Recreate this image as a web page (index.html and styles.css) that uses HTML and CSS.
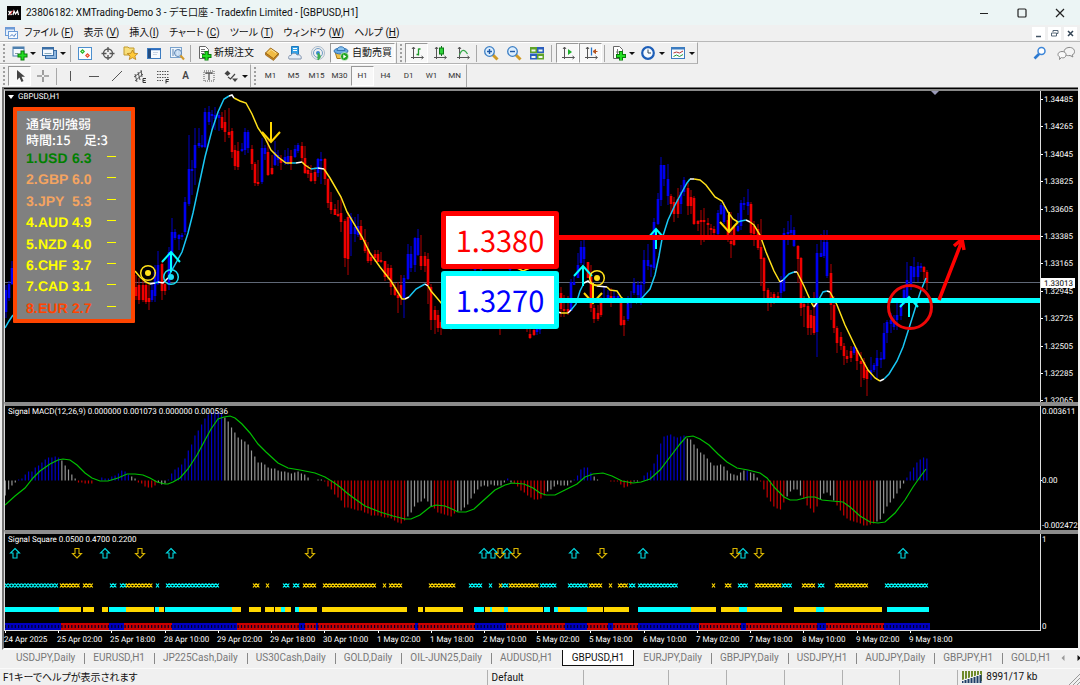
FILE: index.html
```html
<!DOCTYPE html>
<html lang="ja">
<head>
<meta charset="utf-8">
<title>23806182: XMTrading-Demo 3</title>
<link rel="stylesheet" href="styles.css">
</head>
<body>
<header class="titlebar">
  <svg class="logo" width="14" height="14" viewBox="0 0 14 14"><rect width="14" height="14" fill="#050505"/><path d="M1.500 5l3 4M4.500 5l-3 4" stroke="#fff" stroke-width="1.300"/><path d="M6 9l1-4 1.500 3L10.500 5l1 4" fill="none" stroke="#fff" stroke-width="1.200"/><path d="M3 8.500l3-4" stroke="#e33" stroke-width="1"/></svg>
  <h1 class="title">23806182: XMTrading-Demo 3 - デモ口座 - Tradexfin Limited - [GBPUSD,H1]</h1>
  <div class="window-buttons">
    <button aria-label="最小化"><svg width="12" height="12"><path d="M2 6.500h8" stroke="#222"/></svg></button>
    <button aria-label="最大化"><svg width="12" height="12"><rect x="2" y="2" width="8" height="8" rx="1" fill="none" stroke="#222" stroke-width="1.200"/></svg></button>
    <button aria-label="閉じる"><svg width="12" height="12"><path d="M2 2l8 8M10 2l-8 8" stroke="#222" stroke-width="1.200"/></svg></button>
  </div>
</header>
<nav class="menubar">
  <svg class="menu-icon" width="13" height="12" viewBox="0 0 13 12"><rect x=".5" y=".5" width="9" height="8" fill="#e6f0fc" stroke="#6d9bd6"/><path d="M0 1.500h10" stroke="#6d9bd6" stroke-width="2"/><rect x="3.500" y="4.500" width="9" height="7" fill="#f7fbff" stroke="#6d9bd6"/><path d="M5 9.500l2-2 2 2 2-3" fill="none" stroke="#4a7dc4"/></svg>
  <button>ファイル (<u>F</u>)</button>
  <button>表示 (<u>V</u>)</button>
  <button>挿入(<u>I</u>)</button>
  <button>チャート (<u>C</u>)</button>
  <button>ツール (<u>T</u>)</button>
  <button>ウィンドウ (<u>W</u>)</button>
  <button>ヘルプ (<u>H</u>)</button>
  <div class="mdi-buttons">
    <button aria-label="チャート最小化"><svg width="13" height="13"><path d="M4 9.500h5" stroke="#456" stroke-width="1.500"/></svg></button>
    <button aria-label="チャートを元に戻す"><svg width="13" height="13"><path d="M5 5V3.500h5v3H8.500M3.500 6h5v3h-5z" fill="none" stroke="#567"/></svg></button>
    <button aria-label="チャートを閉じる"><svg width="13" height="13"><path d="M4 4l5 5M9 4l-5 5" stroke="#345" stroke-width="1.500"/></svg></button>
  </div>
</nav>
<div class="toolbars">
  <div class="toolbar-row">
    <div class="toolbar">
      <i class="grip"></i>
      <button class="drop" aria-label="新規チャート"><svg width="17" height="16"><rect x="2" y="2" width="11" height="9" fill="#f4f9ff" stroke="#4d7fae"/><path d="M2 3h11" stroke="#4d7fae" stroke-width="2"/><path d="M4 8.500h3" stroke="#89a"/><path d="M11.500 5.500v10M6.500 10.500h10" stroke="#0a7d0a" stroke-width="4"/><path d="M11.500 6.500v8M7.500 10.500h8" stroke="#22dd22" stroke-width="2"/></svg></button>
      <button class="drop" aria-label="プロファイル"><svg width="17" height="16"><rect x="4.500" y="5.500" width="11" height="8" fill="#8fb7e0" stroke="#3b6ea5"/><rect x="1.500" y="2.500" width="11" height="8" fill="#f4f9ff" stroke="#3b6ea5"/><path d="M2 3.500h11" stroke="#3b6ea5" stroke-width="2"/><path d="M3.500 8.500h7" stroke="#8ab"/></svg></button>
      <i class="sep"></i>
      <button aria-label="気配値表示"><svg width="16" height="16"><rect x="1.500" y="2.500" width="13" height="12" fill="#fafdff" stroke="#4d8fce"/><path d="M3 6.500l2.500-2.500L8 6.500 5.500 9z" fill="#1fb01f"/><path d="M8 10.500L10.500 8l2.500 2.500-2.500 2.500z" fill="#e8442a"/><circle cx="5.500" cy="6.500" r=".8" fill="#bfb"/><circle cx="10.500" cy="10.500" r=".8" fill="#fca"/></svg></button>
      <button aria-label="データウィンドウ"><svg width="16" height="16"><circle cx="8" cy="8.500" r="4.500" fill="none" stroke="#555" stroke-width="1.300"/><path d="M8 2v5M8 10v5M1.500 8.500h5M9.500 8.500h5" stroke="#555" stroke-width="1.300"/></svg></button>
      <button aria-label="ナビゲーター"><svg width="16" height="16"><path d="M1 2h4l1 1h5v7H1z" fill="#f8de7a" stroke="#c19a2c"/><path d="M9.500 5l1.500 3.200 3.800.4-2.900 2.400.9 3.500-3.300-1.800-3.300 1.800.9-3.500-2.900-2.400 3.800-.4z" fill="#ffc93a" stroke="#b8801a" stroke-width=".8"/></svg></button>
      <button aria-label="ターミナル"><svg width="16" height="16"><rect x="1.500" y="3.500" width="13" height="10" fill="#f7fbff" stroke="#3d7cc0"/><path d="M2 4.500h12.500" stroke="#2d6cc0" stroke-width="1.500"/><path d="M3.500 4v9" stroke="#234c80" stroke-width="3"/><path d="M7 7.500h5M7 9.500h4" stroke="#c8d4e4"/></svg></button>
      <button aria-label="ストラテジーテスター"><svg width="16" height="16"><rect x="1.500" y="2.500" width="11" height="10" fill="#eef5fc" stroke="#7aa2cc"/><path d="M4 4v7M7 5v5M10 4v6" stroke="#5c86b5"/><circle cx="9" cy="8" r="3.500" fill="#cfe4f8" fill-opacity=".8" stroke="#5b85b4"/><path d="M11.500 10.500l3.500 4" stroke="#d49a2a" stroke-width="2"/></svg></button>
      <i class="sep"></i>
      <button class="text-button order"><svg width="15" height="16"><path d="M2.500 1.500h6l3 3v9h-9z" fill="#fff" stroke="#666"/><path d="M4 4.500h4M4 6.500h5M4 8.500h3" stroke="#777"/><path d="M9.500 6v9.500M5 11h9.500" stroke="#0a7d0a" stroke-width="4"/><path d="M9.500 7v8M5.500 11h8" stroke="#22dd22" stroke-width="2"/></svg>新規注文</button>
      <button aria-label="メタエディター"><svg width="16" height="16"><path d="M1.500 8l5-5 8 5.500-5 5.500z" fill="#f0bb45" stroke="#9c681a"/><path d="M1.500 8v2l8 5.500 5-5.500V8.500l-5 5z" fill="#c98520" stroke="#8a5a10" stroke-width=".6"/><path d="M4 7.500l3-3 5 3.500" stroke="#ffe59c" fill="none"/></svg></button>
      <button aria-label="VPS"><svg width="16" height="16"><path d="M4.500 1.500h7v8h-7z" fill="#35a3e8" stroke="#1d78bd"/><path d="M6 3.500h4M6 5.500h4" stroke="#fff"/><path d="M2 14c-1-2 0-4 2-3.500C5 7.500 9 7.500 10 10c3-1 5 1.500 4 4z" fill="#e8eef6" stroke="#8193ad"/></svg></button>
      <button aria-label="シグナル"><svg width="16" height="16"><circle cx="8" cy="8" r="6.500" fill="none" stroke="#a9b9c9"/><circle cx="8" cy="8" r="4.500" fill="none" stroke="#6f9cc4"/><circle cx="8" cy="8" r="2" fill="#3a8ad0"/><path d="M8 8c3 2 3 5 0 7z" fill="#3fae4f" stroke="#3fae4f"/></svg></button>
      <button class="text-button auto"><svg width="17" height="16"><path d="M2 6.500h12l-1 7H4z" fill="#efc148" stroke="#a87a1c"/><ellipse cx="8" cy="6" rx="7" ry="3" fill="#6aabe2" stroke="#3576b4"/><path d="M4 5.500C4 .5 12 .5 12 5.500z" fill="#8cc4f0" stroke="#3576b4"/><circle cx="11.500" cy="11.500" r="4" fill="#22a522" stroke="#fff" stroke-width=".6"/><path d="M10.300 9.500l3 2-3 2z" fill="#fff"/></svg>自動売買</button>
    </div>
    <div class="toolbar">
      <i class="grip"></i>
      <button class="pressed" aria-label="バーチャート"><svg width="16" height="16"><path d="M4.500 2v12M2 12.500h12M3 4l1.500-2L6 4M12.500 11l2 1.500-2 1.500" fill="none" stroke="#555"/><path d="M9.500 3.500v7M9.500 4h2M7.500 9.500h2" stroke="#1f9a2a" stroke-width="1.300"/></svg></button>
      <button aria-label="ローソク足"><svg width="16" height="16"><path d="M4.500 2v12M2 12.500h12M3 4l1.500-2L6 4M12.500 11l2 1.500-2 1.500" fill="none" stroke="#555"/><path d="M9.500 1v10" stroke="#176e1f"/><rect x="7.500" y="3" width="4" height="6" fill="#2fd23a" stroke="#0c7a15"/></svg></button>
      <button aria-label="ラインチャート"><svg width="16" height="16"><path d="M4.500 2v12M2 12.500h12M3 4l1.500-2L6 4M12.500 11l2 1.500-2 1.500" fill="none" stroke="#555"/><path d="M4.500 10c2-6 5-6 8-1" fill="none" stroke="#37a84a" stroke-width="1.200"/></svg></button>
      <i class="sep"></i>
      <button aria-label="ズームイン"><svg width="16" height="16"><path d="M9.500 9.500l5 5" stroke="#cf9a26" stroke-width="3"/><circle cx="6.500" cy="6.500" r="4.800" fill="#dceefe" stroke="#3d7fc4" stroke-width="1.300"/><path d="M4 6.500h5M6.500 4v5" stroke="#225ca8" stroke-width="1.400"/></svg></button>
      <button aria-label="ズームアウト"><svg width="16" height="16"><path d="M9.500 9.500l5 5" stroke="#cf9a26" stroke-width="3"/><circle cx="6.500" cy="6.500" r="4.800" fill="#dceefe" stroke="#3d7fc4" stroke-width="1.300"/><path d="M4 6.500h5" stroke="#225ca8" stroke-width="1.400"/></svg></button>
      <button aria-label="整列"><svg width="16" height="16"><rect x="1" y="2" width="7" height="6" fill="#5fa32a"/><rect x="8" y="2" width="7" height="6" fill="#2b5ebd"/><rect x="1" y="8.500" width="7" height="6" fill="#2b5ebd"/><rect x="8" y="8.500" width="7" height="6" fill="#5fa32a"/><path d="M2.500 5.500h4M9.500 5.500h4M2.500 12h4M9.500 12h4" stroke="#f3f9ee" stroke-width="2"/></svg></button>
      <i class="sep wide"></i>
      <button class="pressed" aria-label="自動スクロール"><svg width="16" height="16"><path d="M4.500 2v12M2 12.500h12M3 4l1.500-2L6 4M12.500 11l2 1.500-2 1.500" fill="none" stroke="#555"/><path d="M8 4l4 3-4 3z" fill="#1fb02c"/></svg></button>
      <button class="pressed" aria-label="チャートシフト"><svg width="16" height="16"><path d="M4.500 2v12M2 12.500h12M3 4l1.500-2L6 4M12.500 11l2 1.500-2 1.500" fill="none" stroke="#555"/><path d="M8.500 2.500v8" stroke="#2673c8" stroke-width="1.300"/><path d="M10 6.500l2.500-2v4zM12 6.500h2.500" fill="#b5531e" stroke="#b5531e"/></svg></button>
      <i class="sep"></i>
      <button class="drop" aria-label="インディケータ"><svg width="17" height="16"><path d="M3.500 1.500h6l3 3v9h-9z" fill="#fff" stroke="#666"/><path d="M7.500 4v7M6 7h3" stroke="#777"/><path d="M11 6v9.500M6 11h10" stroke="#0a7d0a" stroke-width="4"/><path d="M11 7v8M7 11h8" stroke="#22dd22" stroke-width="2"/></svg></button>
      <button class="drop" aria-label="時間足"><svg width="17" height="16"><circle cx="8" cy="8" r="5.800" fill="#f7fbff" stroke="#1e5fb8" stroke-width="2.200"/><path d="M8 4.500V8h3" fill="none" stroke="#345"/></svg></button>
      <button class="drop" aria-label="テンプレート"><svg width="17" height="16"><rect x="1.500" y="2.500" width="13" height="11" fill="#f7fbff" stroke="#3d7cc0"/><path d="M2 3.500h13" stroke="#3d7cc0" stroke-width="2"/><path d="M3.500 8l3-1 3 1 3.500-2" fill="none" stroke="#b33"/><path d="M3.500 11.500l3-1.500 3 1.500 3.500-2" fill="none" stroke="#2a9a3a"/></svg></button>
    </div>
    <div class="toolbar-tail">
      <button aria-label="検索"><svg width="16" height="16"><path d="M2.500 13.500l5-5" stroke="#2d7ad0" stroke-width="2.600"/><circle cx="9.500" cy="6" r="3.500" fill="#fff" stroke="#3d86d8" stroke-width="1.500"/></svg></button>
      <button aria-label="チャット"><svg width="18" height="16"><path d="M7 7c0-6 10.500-6 10.500-.5 0 2-1 3-2.500 3.500l1 2-3-1.500C9 11 7 9.500 7 7z" fill="#f4f4f4" stroke="#888"/><path d="M1 9.500C1 5.500 9 5.500 9 9.500S5 13 4.500 12.500L2.500 14.500l.3-2.500C1.500 11.500 1 10.500 1 9.500z" fill="#fafafa" stroke="#888"/></svg></button>
    </div>
  </div>
  <div class="toolbar-row">
    <div class="toolbar">
      <i class="grip"></i>
      <button class="pressed" aria-label="カーソル"><svg width="16" height="16"><path d="M5 2v10l2.500-2.500 2 4.500 2-1-2-4.200H13z" fill="#444"/></svg></button>
      <button aria-label="十字カーソル"><svg width="16" height="16"><path d="M8 2v5M8 9v5M2 8h5M9 8h5" stroke="#666" stroke-width="1.200"/></svg></button>
      <i class="sep"></i>
      <button aria-label="垂直線"><svg width="16" height="16"><path d="M7.500 3v10" stroke="#555"/></svg></button>
      <button aria-label="水平線"><svg width="16" height="16"><path d="M3 8.500h10" stroke="#555"/></svg></button>
      <button aria-label="トレンドライン"><svg width="16" height="16"><path d="M3 13L13 3" stroke="#555"/></svg></button>
      <button aria-label="チャネル"><svg width="16" height="16"><path d="M2 9l8-6M3 13l8-7M3 6l2 8M6 4l2 8M9 2l1 7" stroke="#555" fill="none"/><path d="M14 10.500h-3v4h3M11 12.500h2.500" stroke="#333" fill="none"/></svg></button>
      <button aria-label="フィボナッチ"><svg width="16" height="16"><path d="M2 3.500h12M2 6.500h12M2 9.500h12M2 12.500h6" stroke="#555" stroke-dasharray="1.500 1"/><path d="M14 11.500h-3v4M11 13.500h2.500" stroke="#333" fill="none"/></svg></button>
      <button class="glyph" aria-label="テキスト">A</button>
      <button aria-label="ラベル"><svg width="16" height="16"><rect x="3" y="3" width="10" height="10" fill="none" stroke="#555" stroke-dasharray="1 1"/><path d="M5 6V5h6v1M8 5v7" stroke="#555" stroke-width="1.300" fill="none"/></svg></button>
      <button class="drop" aria-label="矢印"><svg width="17" height="16"><path d="M1.500 5.500L4.500 2.500 7.500 5.500 4.500 8z" fill="#444"/><path d="M5 9l2.500 2L12 6" fill="none" stroke="#444" stroke-width="1.200"/><path d="M9 10.500h6L12 14z" fill="#444"/></svg></button>
    </div>
    <div class="toolbar periods">
      <i class="grip"></i>
      <button>M1</button><button>M5</button><button>M15</button><button>M30</button><button class="pressed">H1</button><button>H4</button><button>D1</button><button>W1</button><button>MN</button>
    </div>
  </div>
</div>
<main class="chart">
  <section class="pane price">
    <svg class="plot" id="price-plot"></svg>
    <svg class="axis" id="price-axis"></svg>
    <p class="pane-title"><span class="caret"></span>GBPUSD,H1</p>
    <div class="strength">
      <p>通貨別強弱</p>
      <p>時間:15　足:3</p>
      <ol>
        <li class="s-green"><b>1.</b><b>USD</b><b>6.3</b><i></i></li>
        <li class="s-tan"><b>2.</b><b>GBP</b><b>6.0</b><i></i></li>
        <li class="s-tan"><b>3.</b><b>JPY</b><b>5.3</b><i></i></li>
        <li><b>4.</b><b>AUD</b><b>4.9</b><i></i></li>
        <li><b>5.</b><b>NZD</b><b>4.0</b><i></i></li>
        <li><b>6.</b><b>CHF</b><b>3.7</b><i></i></li>
        <li><b>7.</b><b>CAD</b><b>3.1</b><i></i></li>
        <li class="s-red"><b>8.</b><b>EUR</b><b>2.7</b><i></i></li>
      </ol>
    </div>
    <div class="levels">
      <div class="level upper">1.3380</div>
      <div class="level lower">1.3270</div>
    </div>
  </section>
  <section class="pane macd">
    <svg class="plot" id="macd-plot"></svg>
    <svg class="axis" id="macd-axis"></svg>
    <p class="pane-title">Signal MACD(12,26,9) 0.000000 0.001073 0.000000 0.000536</p>
  </section>
  <section class="pane square">
    <svg class="plot" id="square-plot"></svg>
    <svg class="axis" id="square-axis"></svg>
    <p class="pane-title">Signal Square 0.0500 0.4700 0.2200</p>
  </section>
  <svg class="times" id="time-axis"></svg>
</main>
<nav class="tabs">
  <button>USDJPY,Daily</button><button>EURUSD,H1</button><button>JP225Cash,Daily</button><button>US30Cash,Daily</button><button>GOLD,Daily</button><button>OIL-JUN25,Daily</button><button>AUDUSD,H1</button><button class="active">GBPUSD,H1</button><button>EURJPY,Daily</button><button>GBPJPY,Daily</button><button>USDJPY,H1</button><button>AUDJPY,Daily</button><button>GBPJPY,H1</button><button>GOLD,H1</button>
  <div class="tab-scroll"><button class="off" aria-label="前へ"><svg width="6" height="8"><path d="M4.500 1v6L1.500 4z" fill="#999"/></svg></button><button aria-label="次へ"><svg width="6" height="8"><path d="M1.500 1v6L5 4z" fill="#111"/></svg></button></div>
</nav>
<footer class="status">
  <span class="hint">F1キーでヘルプが表示されます</span>
  <span class="profile">Default</span>
  <span class="c1"></span><span class="c2"></span><span class="c2"></span><span class="c2"></span><span class="c2"></span><span class="c2"></span>
  <span class="traffic"><svg width="20" height="12"><path d="M0 5h20" stroke="#6f8a2a" stroke-width="10" stroke-dasharray="2 1"/><path d="M0 11V9l19-6v8z" fill="#f0f0f0"/><path d="M.5 12v-2M3.500 12V9M6.500 12V8M9.500 12V7M12.500 12V6M15.500 12V5M18.500 12V4" stroke="#1d3d66" stroke-width="2"/></svg>8991/17 kb</span>
  <svg class="resize" width="12" height="14"><path d="M1 14L12 3M5 14l7-7M9 14l3-3" stroke="#999"/></svg>
</footer>
<script src="chart.js"></script>
</body>
</html>
```
FILE: styles.css
```css
* { box-sizing: border-box; }
body {
  margin: 0; height: 100vh; overflow: hidden;
  display: flex; flex-direction: column;
  background: #f0f0f0; color: #111;
  font: 10px/16px Roboto, "Noto Sans CJK JP", sans-serif;
  font-feature-settings: "palt";
}
button { border: 0; padding: 0; background: none; font: inherit; color: inherit; display: flex; align-items: center; justify-content: center; }
button, p { white-space: pre; }
p, h1, ol { margin: 0; padding: 0; list-style: none; }
svg { flex: none; }

.titlebar { height: 25px; flex: none; display: flex; align-items: center; gap: 5px; padding: 0 14px 0 7px; background: #ecf5f5; }
.title { font-size: 10px; font-weight: 400; }
.window-buttons { margin-left: auto; display: flex; gap: 26px; }

.menubar { height: 17px; flex: none; display: flex; align-items: center; gap: 10px; padding: 0 3px 0 5px; border-bottom: 1px solid #b8b8b8; }
.menu-icon { margin-right: -4px; }
.menubar u { text-underline-offset: 1px; }
.mdi-buttons { margin-left: auto; display: flex; gap: 3px; }
.mdi-buttons button { background: #fff; }

.toolbars { flex: none; display: flex; flex-direction: column; }
.toolbar-row { display: flex; height: 22px; }
.toolbar-row + .toolbar-row { height: 23px; }
.toolbar { display: flex; align-items: center; padding-left: 3px; border-right: 1px solid #a8a8a8; border-bottom: 1px solid #b4b4b4; border-top: 1px solid #fff; }
.toolbar-row + .toolbar-row .toolbar { border-bottom: 0; }
.toolbar button { width: 23px; height: 20px; flex: none; }
.grip { width: 2px; height: 18px; margin-right: 3px; border-left: 2px dotted #a0a0a0; }
.sep { width: 1px; height: 17px; margin: 0 2px; background: #a8a8a8; }
.sep.wide { margin: 0 4px 0 3px; }
.toolbar .drop { width: 30px; gap: 2px; }
.drop::after { content: ""; border: 3px solid transparent; border-top-color: #111; border-bottom: 0; }
.pressed { background: #f8f8f8; border: 1px solid #fff; border-top-color: #999; border-left-color: #999; }
.toolbar .text-button { width: auto; gap: 2px; padding: 0 6px 0 4px; }
.toolbar .auto { width: 65px; margin: 0 1px; padding: 0; background: #f8f8f8; border: 1px solid #fff; border-top-color: #999; border-left-color: #999; }
.glyph { font-weight: 600; color: #444; }
.periods { font-size: 8px; color: #333; padding-left: 3px; text-rendering: geometricPrecision; }
.toolbar-tail { margin-left: auto; display: flex; align-items: center; gap: 9px; padding-right: 5px; }

.chart { flex: 1; min-height: 0; display: flex; flex-direction: column; margin: 0 2px; padding-top: 1px; background: #000; border-top: 1px solid #777; border-left: 2px solid #777; border-bottom: 2px solid #fff; color: #fff; text-rendering: geometricPrecision; }
.pane { position: relative; min-height: 0; display: grid; grid-template: minmax(0, 1fr) / 1fr 38px; border-left: 1px solid #ddd; border-top: 4px solid #8c8c8c; }
.pane svg { width: 100%; height: 100%; display: block; }
.pane .axis { border-left: 1px solid #ddd; }
.price { flex: 1 1 313px; border-top: 2px solid #8a8a8a; }
.macd { flex: 0 1 128px; }
.square { flex: 0 1 101px; }
.square .plot { border-bottom: 1px solid #ddd; }
.pane > .pane-title { position: absolute; top: 0; left: 3px; display: flex; align-items: center; gap: 4px; font: 8px/12px Roboto, sans-serif; }
.caret { border: 3px solid transparent; border-top: 4px solid #fff; border-bottom: 0; }
.times { width: 100%; height: 17px; flex: none; }
svg text { font: 8px Roboto, sans-serif; fill: #fff; }
svg .bid { fill: #000; }

.strength { position: absolute; left: 8px; top: 16px; width: 122px; height: 216px; display: flex; flex-direction: column; padding: 5px 0 0 9px; border: 4px solid #ff4500; border-radius: 1px; background: #808080; font: 500 13px/16px "Noto Sans CJK JP", sans-serif; }
.strength ol { flex: 1; display: flex; flex-direction: column; font: 14px/20px "Liberation Sans", sans-serif; color: #ff0; }
.strength li { flex: 1; display: grid; grid-template-columns: 12px 34px 35px 9px; }
.strength li i { height: 1px; margin-top: 8px; background: #ff0; }
.strength .s-green { color: green; }
.strength .s-tan { color: #f4a460; }
.strength .s-red { color: #ff4500; }
.levels { position: absolute; left: 436px; top: 120px; display: flex; flex-direction: column; gap: 2px; }
.level { width: 118px; border: 5px solid red; border-radius: 3px; background: #fff; color: red; font: 29px/48px "Noto Sans CJK JP", sans-serif; text-align: center; font-feature-settings: normal; }
.lower { border-color: cyan; color: blue; }

.tabs { height: 18px; flex: none; display: flex; align-items: flex-start; padding-left: 7px; color: #777; overflow: hidden; }
.tabs > button { padding: 0 9px; height: 16px; position: relative; }
.tabs > button + button:not(.active)::before { content: ""; position: absolute; left: 0; top: 3px; height: 11px; border-left: 1px solid #888; }
.tabs .active { background: #fff; color: #111; border: 1px solid #111; border-top: 0; }
.tabs .active + button::before { display: none; }
.tab-scroll { display: flex; gap: 10px; height: 16px; margin-left: auto; padding-right: 7px; }

.status { height: 17px; flex: none; display: flex; align-items: center; border-top: 1px solid #fafafa; padding-left: 3px; }
.status span { height: 15px; line-height: 16px; }
.status span + span { border-left: 1px solid #b0b0b0; }
.hint { flex: 485 0 0; }
.status .profile { flex: 92 0 0; padding-left: 4px; }
.c1 { flex: 84 0 0; }
.c2 { flex: 57 0 0; }
.traffic { display: flex; align-items: center; gap: 4px; flex: 106 0 0; padding-left: 4px; }
.resize { align-self: flex-end; }
```
FILE: chart.js
```js
const NS = "http://www.w3.org/2000/svg";
const BLUE = "#0000f0", RED = "#f00000", CYAN = "#00ffff", GOLD = "#ffd700";
const STEP = 3.327, FIRST = 5.3;

function add(parent, tag, attrs, text) {
  const el = document.createElementNS(NS, tag);
  for (const k in attrs) el.setAttribute(k, attrs[k]);
  if (text !== undefined) el.textContent = text;
  parent.appendChild(el);
  return el;
}
function layer(id, x, y) {
  return add(document.getElementById(id), "g", { transform: `translate(${-x},${-y})` });
}

/* Candles: x, wick top, wick bottom, body top, body bottom, direction */
const candles = `6 285 318 290 312 b,9 281 301 284 298 b,12 261 285 268 284 b,
136 275 300 287 296 r,139 278 304 285 300 r,143 280 302 285 300 r,146 282 304 285 302 r,149 285 310 298 302 r,152 283 302 290 300 b,155 265 302 272 296 b,158 251 285 265 284 b,162 261 300 264 291 r,165 280 295 284 291 r,169 247 290 252 285 b,172 218 270 232 253 b,175 229 240 232 238 b,179 234 250 235 239 b,182 233 240 235 237 b,185 197 235 202 232 b,189 135 206 169 204 b,192 160 195 169 171 b,195 128 185 145 168 b,199 128 148 143 146 b,202 135 148 145 147 b,205 108 148 112 147 b,209 106 125 112 122 b,212 110 130 114 116 b,215 107 130 115 119 b,219 112 131 115 118 b,222 112 130 117 128 r,225 110 142 122 132 r,229 108 138 132 135 r,232 128 158 131 152 r,235 145 170 150 166 r,238 142 170 151 167 r,242 143 152 149 151 b,245 128 155 132 150 b,248 130 153 132 148 b,252 145 170 149 164 r,255 162 186 164 183 r,258 160 186 182 184 r,262 138 184 148 182 b,265 145 160 148 154 b,268 140 176 152 175 r,272 155 175 168 174 r,275 141 166 152 165 b,278 150 166 155 160 b,
281 155 170 159 163 r,285 150 165 157 163 b,288 148 165 156 163 b,291 150 170 156 163 r,295 145 158 149 157 b,298 143 153 145 151 b,302 142 162 146 158 r,305 146 174 158 173 r,308 165 178 170 174 r,311 165 182 173 181 r,315 167 184 172 181 r,318 158 177 159 173 b,321 152 184 159 161 b,325 158 185 159 179 r,328 178 208 179 203 r,331 192 214 202 210 r,335 204 215 209 215 r,338 200 217 214 216 r,341 197 232 213 222 r,345 219 267 221 258 r,348 212 275 217 259 r,351 213 256 217 234 b,355 217 242 227 234 b,358 214 237 226 235 b,361 220 240 226 240 r,365 229 253 240 251 r,368 242 263 249 261 r,371 253 265 257 261 r,375 250 262 254 258 r,378 250 262 254 262 r,381 252 263 260 262 r,385 261 281 261 277 r,388 264 280 268 276 r,391 265 295 268 287 r,395 283 296 287 295 r,398 282 313 295 298 r,401 275 305 285 298 r,404 275 318 278 298 b,408 244 280 254 279 b,411 246 272 254 268 b,415 237 272 238 265 b,418 229 256 238 255 b,421 235 270 256 266 r,425 252 272 256 266 r,428 253 304 259 285 r,431 284 330 287 320 r,435 306 334 310 320 r,438 310 332 315 328 r,441 320 335 322 328 r,
451 320 330 322 328 r,475 268 272 268 270 b,481 268 272 268 270 b,500 325 335 326 329 r,510 268 272 268 270 b,527 320 332 322 328 r,530 325 339 334 338 r,534 325 336 330 335 r,537 325 335 329 332 b,540 325 334 328 330 b,
561 287 317 293 309 r,564 295 317 309 311 r,568 296 315 309 312 r,571 279 310 282 311 b,574 276 285 282 285 b,578 253 278 265 278 b,581 241 265 247 263 b,584 237 265 247 259 b,588 262 278 262 278 r,591 265 312 277 308 r,594 305 323 308 319 r,598 305 321 313 319 r,601 297 317 300 315 r,604 287 301 298 300 b,608 290 299 295 298 b,611 288 307 296 300 r,614 290 302 296 300 b,618 294 301 296 300 b,621 298 326 303 325 r,624 316 336 320 325 r,628 296 321 300 319 b,631 291 308 298 303 b,634 278 295 283 293 b,638 281 298 285 295 b,641 281 305 285 300 b,644 250 295 260 284 b,648 244 270 260 266 b,651 264 277 265 267 b,654 218 270 222 268 b,658 193 225 199 224 b,661 157 206 165 200 b,664 165 186 165 179 b,668 164 205 179 196 b,671 194 214 196 204 r,674 197 222 202 214 r,678 188 218 199 214 r,681 185 214 192 204 b,684 177 196 180 192 b,688 183 215 188 206 r,691 190 214 197 206 r,694 196 225 198 224 r,698 220 231 221 224 r,701 210 245 220 222 r,704 208 242 220 222 r,708 218 235 223 225 r,711 224 235 228 230 r,714 226 235 229 233 r,718 210 235 213 234 b,721 203 215 205 214 b,724 202 224 206 222 b,728 215 242 220 240 r,731 212 258 241 244 r,734 225 246 227 245 r,738 213 232 226 231 b,741 200 230 203 226 b,744 197 210 203 205 b,748 189 215 202 206 b,751 202 236 204 233 r,754 221 246 226 234 r,758 224 250 229 248 r,761 219 286 247 259 r,764 257 298 258 291 r,768 288 311 290 300 r,771 292 307 297 300 r,774 292 304 294 299 r,778 292 300 296 299 r,781 276 300 280 293 b,784 228 292 233 291 b,788 221 245 232 234 b,791 215 235 230 233 b,794 227 247 230 246 b,798 245 283 246 259 r,801 257 316 258 308 r,804 296 327 304 307 r,808 303 335 306 328 r,811 310 335 315 328 r,814 292 335 316 333 r,817 244 357 253 332 b,821 234 256 253 257 b,824 230 258 242 256 b,827 230 278 242 276 b,831 264 320 273 305 r,834 296 333 305 328 r,
837 326 353 328 343 r,841 332 350 337 346 r,844 343 365 346 356 r,847 350 363 356 359 r,851 346 362 351 358 r,854 346 355 347 353 b,857 348 370 350 361 r,861 352 387 361 364 r,864 358 380 362 378 r,867 367 396 370 379 r,871 357 380 370 373 b,874 363 372 365 370 b,877 350 380 358 366 b,881 352 368 358 360 b,884 323 360 333 359 b,887 320 343 322 333 b,891 313 333 320 324 b,894 315 330 322 327 b,897 303 330 315 320 b,901 300 320 304 316 b,904 286 305 290 304 b,907 262 290 280 300 b,911 266 290 266 284 b,914 257 282 267 277 b,918 262 282 266 277 b,921 263 272 266 268 b,924 266 280 267 272 r,927 270 290 272 283 r`;

/* Moving average, one entry per colour run: colour letter then the points */
const average = [
  ["c", "5,328 9,321 13,315"],
  ["y", "135,271 140,277 146,282 150,284"],
  ["w", "150,284 155,283"], ["c", "155,283 158,282"], ["w", "158,282 163,283 168,278"],
  ["c", "168,278 172,270 182,252 188,233 193,213 199,185 205,157 212,130 218,112 224,99 229,96"],
  ["w", "229,96 232,95 234,98"],
  ["y", "234,98 240,101 246,103 252,114 258,128 265,138 271,150 278,157 286,163 292,163"],
  ["c", "292,163 296,163"], ["w", "296,163 302,162"], ["y", "302,162 305,165 311,169"],
  ["c", "311,169 318,168"], ["w", "318,168 324,169"],
  ["y", "324,169 330,178 341,197 347,212 362,237 370,253 380,267 391,281 402,299 405,299"],
  ["w", "405,299 409,297"], ["c", "409,297 416,289 425,284"], ["w", "425,284 428,286"],
  ["y", "428,286 431,291 437,298 442,304"], ["y", "517,268 523,271 530,268"],
  ["w", "558,312 561,313"], ["y", "561,313 568,313"], ["w", "568,313 571,310"],
  ["c", "571,310 576,304 580,291 584,283"], ["w", "584,283 588,281 590,283"],
  ["y", "590,283 597,286"], ["w", "597,286 607,287"], ["y", "607,287 610,290 617,291 621,297 628,303"],
  ["c", "636,303 642,298 650,289 655,275 659,256 662,239 668,220 675,205 682,192 687,183 690,179"],
  ["w", "690,179 694,179"],
  ["y", "694,179 700,180 706,185 715,197 722,201 728,212 733,219 738,222"],
  ["c", "738,222 741,221 746,220"], ["w", "746,220 750,222"],
  ["y", "750,222 754,225 760,235 766,252 774,271 780,282"],
  ["w", "780,282 783,280"], ["c", "783,280 789,274 794,272"], ["w", "794,272 797,272"],
  ["y", "797,272 804,286 812,304 814,307"], ["w", "814,307 818,301"],
  ["c", "818,301 823,292 827,291"], ["w", "827,291 830,292"],
  ["y", "830,292 837,305 845,325 857,350 868,370 875,378 880,381"], ["w", "880,381 884,379"],
  ["c", "884,379 889,374 897,361 903,347 910,325 915,309 920,293 926,278"]
];
const LINE = { c: "#19c8f5", y: "#ffe11a", w: "#ffffff" };

const price = layer("price-plot", 5, 91);
add(price, "line", { x1: 5, x2: "110%", y1: 282.5, y2: 282.5, stroke: "#5f6877" });
candles.split(",").forEach(row => {
  const [x, wt, wb, bt, bb, d] = row.trim().split(" ");
  const n = Number(x);
  add(price, "rect", { x: n - 0.5, y: wt, width: 1, height: wb - wt, fill: d === "b" ? "#0000c8" : "#b40000" });
  add(price, "rect", { x: n - 1.3, y: bt, width: 2.6, height: Math.max(bb - bt, 1), fill: d === "b" ? BLUE : RED });
});
average.forEach(([c, pts]) => add(price, "polyline", { points: pts, fill: "none", stroke: LINE[c], "stroke-width": 1.5 }));

function signal(x, tip, up, color) {
  const s = up ? 1 : -1;
  add(price, "path", { d: `M${x} ${tip + 20 * s}V${tip}M${x - 9} ${tip + 10 * s}L${x} ${tip}L${x + 9} ${tip + 10 * s}`, fill: "none", stroke: color, "stroke-width": 2 });
}
function target(x, y, color) {
  add(price, "circle", { cx: x, cy: y, r: 7.3, fill: "none", stroke: color, "stroke-width": 1.5 });
  add(price, "circle", { cx: x, cy: y, r: 3, fill: color });
}
signal(271, 142, false, GOLD);
signal(171, 252, true, CYAN);
signal(583, 266, true, CYAN);
signal(593, 303, false, GOLD);
signal(656, 229, true, CYAN);
signal(729, 232, false, GOLD);
target(148, 273, "#ffe11a");
target(171, 277, "#19e0f5");
target(597, 278, "#ffe11a");
add(price, "line", { x1: 556, x2: "104%", y1: 237.5, y2: 237.5, stroke: "#ff0000", "stroke-width": 5 });
add(price, "line", { x1: 556, x2: "104%", y1: 300.5, y2: 300.5, stroke: CYAN, "stroke-width": 5 });
signal(909, 297, true, CYAN);
add(price, "circle", { cx: 910, cy: 307, r: 21.5, fill: "none", stroke: "#f00808", "stroke-width": 3 });
add(price, "path", { d: "M939 300L962 241M954 246L962 239L964 250", fill: "none", stroke: "#ff0000", "stroke-width": 3.5 });
add(price, "path", { d: "M930 90h10l-5 5z", fill: "#9a9ab8" });

const priceAxis = layer("price-axis", 1041, 91);
["1.34485", "1.34265", "1.34045", "1.33825", "1.33605", "1.33385", "1.33165", "1.32945", "1.32725", "1.32505", "1.32285", "1.32065"].forEach((t, i) => {
  const y = 99 + Math.round(27.4 * i);
  add(priceAxis, "path", { d: `M1041 ${y + 0.5}h2`, stroke: "#fff" });
  add(priceAxis, "text", { x: 1044, y: y + 3 }, t);
});
add(priceAxis, "rect", { x: 1041, y: 278, width: 34, height: 10, fill: "#fff" });
add(priceAxis, "text", { x: 1044, y: 286, class: "bid" }, "1.33013");

/* MACD histogram: colour and consecutive bar heights */
const histogram = [
  ["g", [-15, -9, -5, -2]], ["b", [1, 2, 6, 9, 9, 13, 15, 18, 21, 23, 23, 24, 23]],
  ["g", [20, 15, 11, 6, 2]], ["r", [-2, -2, -3, -3, -3, 0, 0]],
  ["b", [3, 2, 2, 4, 5, 7, 10, 9, 6]], ["g", [4, 2]], ["r", [-2, -3, -6, -7, -7, -5]],
  ["g", [-2, -4, -3]], ["b", [1, 7, 11, 13, 16, 22, 30, 36, 45, 50, 56, 62, 66, 68, 69, 69, 67]],
  ["g", [63, 59, 53, 48, 43, 41, 39, 36, 30, 24, 18, 18, 16, 13, 12, 12, 10, 9, 9, 8, 7, 8, 9, 7, 6, 3, 0, 0, 1, 1]],
  ["r", [-1, -6, -9, -14, -17, -20, -27, -27, -28, -29, -30, -30, -32, -33, -35, -35, -35, -36, -37, -37, -38, -40, -42, -43, -40]],
  ["g", [-36, -32, -26, -22, -21, -18, -21, -26]], ["r", [-28, -32, -33, -34, -35, -36, -33]],
  ["g", [-31, -30, -27, -24, -18, -13, -9, -6, -5, -6, -4, -5, -5, -5, -2]], ["b", [2]], ["g", [-2]],
  ["r", [-3, -6, -10, -12, -15, -17, -19, -19, -18, -15]], ["g", [-11, -9, -6, -4, -5, -5, -5, -2]],
  ["b", [1, 5, 11, 13, 13, 8]], ["g", [4, 1, 0, 0, 0]], ["r", [-1, -1, -1, -4, -7, -6, -4]],
  ["g", [-1, -1]], ["b", [0, 5, 8, 10, 17, 26, 37, 44, 45, 46, 44, 43, 44, 45]],
  ["g", [42, 41, 36, 32, 28, 26, 22, 18, 15, 15, 16, 14, 10, 7, 6, 5, 8, 10]], ["b", [10]],
  ["g", [8, 7, 3]], ["r", [-1, -9, -17, -21, -26, -28, -29, -22]], ["g", [-16, -11, -9, -9, -15]],
  ["r", [-18, -25, -28, -32, -26]], ["g", [-19, -13, -12, -15, -20]],
  ["r", [-25, -30, -35, -38, -40, -41, -42, -43, -45, -45, -44, -43]],
  ["g", [-41, -39, -33, -26, -22, -18, -13, -8, -3]], ["b", [3, 9, 13, 18, 21, 23, 22]]
];
const HIST = { g: "#949494", b: "#0000c8", r: "#c80000" };
const macd = layer("macd-plot", 5, 406);
let bar = 0;
histogram.forEach(([c, values]) => values.forEach(v => {
  add(macd, "rect", { x: FIRST + STEP * bar - 0.6, y: Math.min(480.5, 480.5 - v), width: 1.2, height: Math.abs(v), fill: HIST[c] });
  bar++;
}));
add(macd, "polyline", {
  points: "5,505 15,496 25,488 33,478 40,471 50,464 58,460 63,459 70,460 77,465 85,473 92,478 100,481 108,481 118,478 127,474 135,474 143,475 150,478 157,482 165,484 168,484 173,482 180,478 188,469 197,455 204,442 211,429 218,419 224,417 230,416 235,418 242,424 250,433 258,444 266,452 278,463 288,468 300,470 315,473 325,477 333,482 340,487 347,493 355,499 365,506 380,512 393,516 405,519 411,519 420,515 430,507 436,505 445,506 452,509 458,512 466,512 474,509 485,499 495,490 505,485 512,483 524,484 533,488 540,493 546,495 555,495 565,490 577,484 585,477 593,474 603,473 612,476 622,481 633,483 641,482 650,479 660,470 670,457 680,444 686,437 693,436 700,439 709,445 718,454 727,462 737,468 748,470 760,473 767,478 775,488 784,497 790,500 797,500 808,497 815,497 822,500 832,501 843,502 850,507 860,516 870,522 878,523 885,522 895,513 905,500 913,487 920,477 926,469",
  fill: "none", stroke: "#00c000", "stroke-width": 1.2
});
const macdAxis = layer("macd-axis", 1041, 406);
[["0.003611", 414], ["0.00", 483], ["-0.002472", 528]].forEach(([t, y]) => add(macdAxis, "text", { x: 1042, y }, t));
add(macdAxis, "path", { d: "M1041 480.500h1", stroke: "#fff" });

/* Signal Square rows */
const square = layer("square-plot", 5, 534);
const PAIR = { c: CYAN, y: GOLD };
function smallArrow(x, up) {
  const d = up ? `M${x} 548.500l4.500 4.500h-2.500v5h-4v-5h-2.500z` : `M${x} 558l4.500 -4.500h-2.500v-5h-4v5h-2.500z`;
  add(square, "path", { d, fill: "none", stroke: up ? "#00d8e0" : "#d8b400", "stroke-width": 1.1 });
}
[15, 105, 171, 484, 493, 507, 574, 643, 743, 903].forEach(x => smallArrow(x, true));
[77, 140, 310, 500, 516, 602, 735, 759].forEach(x => smallArrow(x, false));

"c 5 57,y 60 79,y 83 93,c 110 115,c 120 125,y 126 152,c 156 159,c 166 219,y 253 258,y 266 268,c 283 288,c 293 298,y 303 315,y 323 375,y 383 386,y 389 401,y 429 455,c 469 481,c 489 491,y 499 501,c 502 508,y 509 539,c 540 558,c 568 588,y 589 601,y 609 612,y 618 628,c 629 634,c 638 677,y 712 715,y 725 731,c 738 747,y 755 781,c 782 793,y 802 814,c 818 824,y 835 867,c 885 928".split(",").forEach(run => {
  const [c, a, b] = run.split(" ");
  const n = Math.max(1, Math.round((b - a) / STEP));
  let d = "";
  for (let i = 0; i < n; i++) {
    const x = Number(a) + i * STEP;
    d += `M${x.toFixed(1)} 583.500l3 4m0 -4l-3 4`;
  }
  add(square, "path", { d, fill: "none", stroke: PAIR[c], "stroke-width": 1.2 });
});
"c 5 59,y 59 81,y 83 94,y 102 108,c 109 126,y 126 154,c 155 159,y 159 164,c 165 232,y 232 241,y 249 261,y 265 274,y 275 281,c 281 285,y 285 291,c 295 299,y 299 317,y 322 407,y 418 423,y 425 463,c 474 484,y 485 490,c 490 492,y 492 504,c 504 508,y 508 543,c 544 550,c 554 558,y 558 570,c 570 587,y 587 603,y 604 629,c 638 691,y 691 716,y 721 739,c 739 747,y 747 782,y 794 816,c 816 824,y 824 882,c 887 929".split(",").forEach(run => {
  const [c, a, b] = run.split(" ");
  add(square, "rect", { x: a, y: 607, width: b - a, height: 5, fill: PAIR[c] });
});
add(square, "rect", { x: 5, y: 623, width: 925, height: 7, fill: "#0000c0" });
[[61, 109], [124, 172], [237, 299], [305, 316], [318, 415], [418, 475], [506, 565], [587, 608], [613, 638], [699, 741], [746, 817], [826, 884]].forEach(([a, b]) => {
  add(square, "rect", { x: a, y: 623, width: b - a, height: 7, fill: "#c80000" });
});
let dots = "";
for (let i = 0; i < 278; i++) dots += `M${(FIRST + STEP * i).toFixed(1)} 625v3`;
add(square, "path", { d: dots, stroke: "#000028", "stroke-width": 1.2 });
const squareAxis = layer("square-axis", 1041, 534);
add(squareAxis, "text", { x: 1042, y: 542 }, "1");
add(squareAxis, "text", { x: 1042, y: 629 }, "0");

const times = layer("time-axis", 4, 631);
["24 Apr 2025", "25 Apr 02:00", "25 Apr 18:00", "28 Apr 10:00", "29 Apr 02:00", "29 Apr 18:00", "30 Apr 10:00", "1 May 02:00", "1 May 18:00", "2 May 10:00", "5 May 02:00", "5 May 18:00", "6 May 10:00", "7 May 02:00", "7 May 18:00", "8 May 10:00", "9 May 02:00", "9 May 18:00"].forEach((t, i) => {
  const x = Math.round(5 + 53.22 * i);
  add(times, "path", { d: `M${x + 0.5} 631v2`, stroke: "#fff" });
  add(times, "text", { x: x - 1, y: 642 }, t);
});
```
